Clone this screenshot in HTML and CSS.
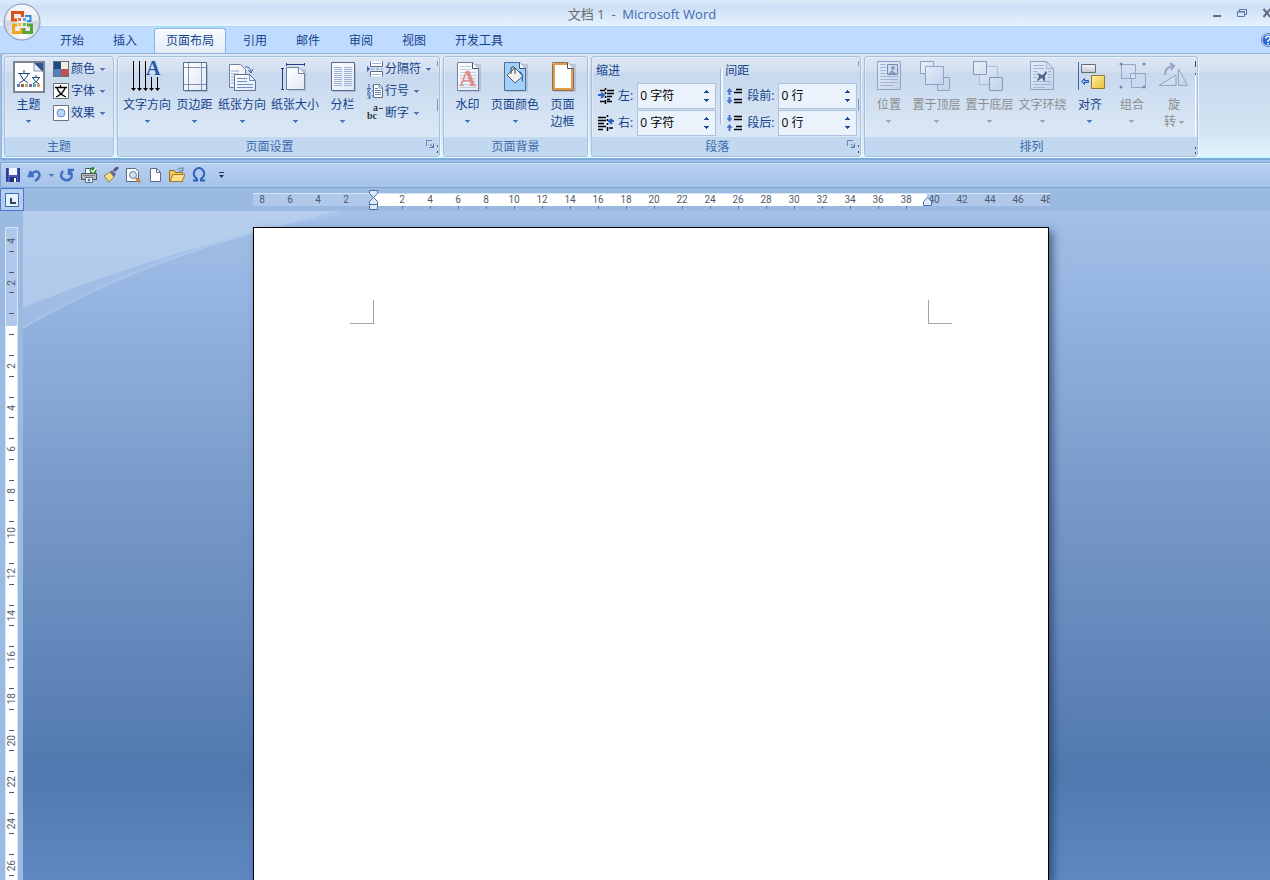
FILE: index.html
```html
<!DOCTYPE html>
<html lang="zh-CN">
<head>
<meta charset="utf-8">
<title>文档 1 - Microsoft Word</title>
<link rel="stylesheet" href="styles.css">
</head>
<body>
<svg class="defs" aria-hidden="true">
  <defs>
    <linearGradient id="paper" x1="0" y1="0" x2="1" y2="1"><stop offset="0" stop-color="#fff"/><stop offset="1" stop-color="#dfe8f5"/></linearGradient>
    <linearGradient id="faded" x1="0" y1="0" x2="1" y2="1"><stop offset="0" stop-color="#e6edf8"/><stop offset="1" stop-color="#c3d2ea"/></linearGradient>
    <linearGradient id="gold" x1="0" y1="0" x2="1" y2="1"><stop offset="0" stop-color="#fff0a0"/><stop offset="1" stop-color="#e9bf35"/></linearGradient>
    <linearGradient id="silver" x1="0" y1="0" x2="0" y2="1"><stop offset="0" stop-color="#f6f7f8"/><stop offset="1" stop-color="#c3c7ce"/></linearGradient>
    <radialGradient id="orb" cx=".5" cy=".85" r=".9"><stop offset="0" stop-color="#fff"/><stop offset=".55" stop-color="#cdd5e3"/><stop offset="1" stop-color="#f2f5fa"/></radialGradient>
    <symbol id="down" viewBox="0 0 5 3"><path d="M0 0h5v1H4v1H3v1H2V2H1V1H0z"/></symbol>
    <symbol id="up" viewBox="0 0 5 3"><path d="M2 0h1v1h1v1h1v1H0V2h1V1h1z"/></symbol>
    <symbol id="launch" viewBox="0 0 9 9"><path d="M.5 6V.5H6" fill="none" stroke="#6485b5"/><path d="M3.500 7.500h4v-4M4 4l3 3" fill="none" stroke="#5578ae"/></symbol>
  </defs>
</svg>

<header class="titlebar">
  <h1 class="title"><span>文档 1</span> &nbsp;-&nbsp; Microsoft Word</h1>
  <div class="window-buttons">
    <button aria-label="最小化"><svg width="10" height="10"><path d="M1 7h8v2H1z" fill="#606b80"/></svg></button>
    <button aria-label="还原"><svg width="10" height="10"><path d="M2.500 3V1.500h7v5H8M2 1.500h8M.5 3.500h7v5h-7zM0 4h8" fill="none" stroke="#5c78a4"/></svg></button>
    <button aria-label="关闭"><svg width="10" height="10"><path d="M1.500 1l7 8M8.500 1l-7 8" stroke="#606b80" stroke-width="2"/></svg></button>
  </div>
</header>

<button class="office" aria-label="Office 按钮">
  <svg width="38" height="38" viewBox="0 0 38 38">
    <circle cx="19" cy="19" r="18" fill="url(#orb)" stroke="#8391ab"/>
    <path d="M3 17a16 15 0 0 1 32 0q-16 5-32 0z" fill="#fff" opacity=".55"/>
    <g fill="none" stroke-width="3">
      <path d="M14 17H9.500V9.500h10V14" stroke="#dc5016"/>
      <path d="M22 13h5.500v5H24" stroke="#3489d4" stroke-width="2"/>
      <path d="M14 22h-3.500v7.500h8V25" stroke="#f4a51b"/>
      <path d="M24 22h4.500v7.500H21V25" stroke="#54a531"/>
    </g>
    <path d="M15 15h3v3h-3z" fill="#ef6a26"/><path d="M20 15h3v3h-3z" fill="#54a5e8"/><path d="M15 20h3v3h-3z" fill="#f9c239"/><path d="M20 20h3v3h-3z" fill="#78bd45"/>
  </svg>
</button>

<nav class="tabs">
  <button class="tab">开始</button>
  <button class="tab">插入</button>
  <button class="tab active" aria-current="page">页面布局</button>
  <button class="tab">引用</button>
  <button class="tab">邮件</button>
  <button class="tab">审阅</button>
  <button class="tab">视图</button>
  <button class="tab">开发工具</button>
  <button class="help" aria-label="帮助"><svg width="14" height="14"><circle cx="7" cy="7" r="6" fill="#2768d8" stroke="#fff"/><circle cx="7" cy="7" r="6.500" fill="none" stroke="#5679b8"/><path d="M4.500 5.500Q5 3 7.200 3.200T9 6L7 8v1M7 10v1.500" fill="none" stroke="#fff" stroke-width="1.500"/></svg></button>
</nav>

<main class="ribbon">
  <section class="group">
    <div class="tools">
      <button class="big">
        <svg width="32" height="32"><path d="M1 1h30v30H1z" fill="#fff" stroke="#7b8490" stroke-width="2"/><path d="M21 2h9v9z" fill="#31508f"/><path d="M21 2v8h8z" fill="#e6edf7" stroke="#8797b0"/><g fill="none" stroke="#1d4379"><path d="M5 12.500h12M11 9v3M7 13q2 6 8 9M15 13q-2 6-9 9"/><path d="M19 16.500h8M23 14v2M20 17q2 4 6 6M26 17q-2 4-6 6"/></g><path d="M4 23h3v3H4z" fill="#4f81bd"/><path d="M8 23h3v3H8z" fill="#c0504d"/><path d="M12 23h3v3h-3z" fill="#9bbb59"/><path d="M16 23h3v3h-3z" fill="#8064a2"/><path d="M20 23h3v3h-3z" fill="#4bacc6"/><path d="M24 23h3v3h-3z" fill="#f79646"/></svg>
        <span>主题</span><svg class="arrow"><use href="#down"/></svg>
      </button>
      <div class="stack">
        <button class="small"><svg width="16" height="16"><path d="M0 0h16v16H0z" fill="#6b717b"/><path d="M1 1h7v7H1z" fill="#1f497d"/><path d="M8 1h7v7H8z" fill="#eeece1"/><path d="M1 8h7v7H1z" fill="#4f81bd"/><path d="M8 8h7v7H8z" fill="#c0504d"/></svg><span>颜色</span><svg class="arrow"><use href="#down"/></svg></button>
        <button class="small"><svg width="16" height="16"><path d="M.5.5h15v15H.5z" fill="#fff" stroke="#6b717b"/><path d="M2 4.500h12M7.500 2v2M4 5q2 6 9 9M12 5q-2 6-9 9" fill="none" stroke="#000" stroke-width="1.300"/></svg><span>字体</span><svg class="arrow"><use href="#down"/></svg></button>
        <button class="small"><svg width="16" height="16"><path d="M.5.5h15v15H.5z" fill="#fff" stroke="#6b717b"/><circle cx="8" cy="8" r="4" fill="#b9d4fa" stroke="#6b8ccc"/></svg><span>效果</span><svg class="arrow"><use href="#down"/></svg></button>
      </div>
    </div>
    <h2 class="caption">主题</h2>
  </section>

  <section class="group seam">
    <div class="tools">
      <button class="big">
        <svg width="32" height="32"><path d="M2.500 0v28M8.500 0v28M14.500 0v28M20.500 16v12M26.500 16v12" stroke="#000"/><path d="M0 27h5l-2.500 3zM6 27h5l-2.500 3zM12 27h5l-2.500 3zM18 27h5l-2.500 3zM24 27h5l-2.500 3z"/><text x="15" y="14" font-family="Liberation Serif" font-size="20" font-weight="700" fill="#2557ad">A</text></svg>
        <span>文字方向</span><svg class="arrow"><use href="#down"/></svg>
      </button>
      <button class="big">
        <svg width="32" height="32"><path d="M6 4h23v27H6z" fill="#8b9cb8" opacity=".5"/><path d="M4.500 1.500h23v28h-23z" fill="url(#paper)" stroke="#566b8c"/><path d="M9.500 2v27M22.500 2v27M5 6.500h22M5 23.500h22" stroke="#8092b4"/></svg>
        <span>页边距</span><svg class="arrow"><use href="#down"/></svg>
      </button>
      <button class="big">
        <svg width="32" height="32"><path d="M3.500 3.500h11l5 5v18h-16z" fill="url(#paper)" stroke="#6e819e"/><path d="M5 10h8M5 13h8M5 16h8M5 19h8M5 22h8" stroke="#8ea4ca"/><path d="M8.500 13.500h15l6 6v10h-21z" fill="url(#paper)" stroke="#5f7493"/><path d="M23.500 13.500v6h6M11 17.500h10M11 20.500h10M11 23.500h16M11 26.500h16" fill="none" stroke="#6f8fc5"/><path d="M19 6q5-1 6 5M22 9l3 3 2-4" fill="none" stroke="#41659e"/></svg>
        <span>纸张方向</span><svg class="arrow"><use href="#down"/></svg>
      </button>
      <button class="big">
        <svg width="32" height="32"><path d="M7 3.500h19M7.500 2v3M25.500 2v3M3.500 7v22M2 7.500h3M2 28.500h3" stroke="#273d8c"/><path d="M9 8h18v22H9z" fill="#8b9cb8" opacity=".4"/><path d="M7.500 6.500h12l6 6v16h-18z" fill="url(#paper)" stroke="#6e819e"/><path d="M19.500 6.500v6h6" fill="#fff" stroke="#6e819e"/></svg>
        <span>纸张大小</span><svg class="arrow"><use href="#down"/></svg>
      </button>
      <button class="big">
        <svg width="32" height="32"><path d="M6 4h23v27H6z" fill="#8b9cb8" opacity=".5"/><path d="M4.500 1.500h23v28h-23z" fill="url(#paper)" stroke="#566b8c"/><path d="M7 6.500h8M7 8.500h8M7 10.500h8M7 12.500h8M7 14.500h8M7 16.500h8M7 18.500h8M7 20.500h8M7 22.500h8M7 24.500h8M17 6.500h8M17 8.500h8M17 10.500h8M17 12.500h8M17 14.500h8M17 16.500h8M17 18.500h8M17 20.500h8M17 22.500h8M17 24.500h8" stroke="#9db1d6"/></svg>
        <span>分栏</span><svg class="arrow"><use href="#down"/></svg>
      </button>
      <div class="stack">
        <button class="small"><svg width="16" height="16"><path d="M0 5l3 3-3 3z" fill="#2f61b8"/><path d="M3.500.5V5.500h12V.5M3.500 15.500v-5h12v5" fill="#fff" stroke="#5b6e8c"/><path d="M5 2.500h9M5 13.500h9" stroke="#9db1d6"/><path d="M4 8h3M9 8h3M14 8h2" stroke="#7d96be"/></svg><span>分隔符</span><svg class="arrow"><use href="#down"/></svg></button>
        <button class="small"><svg width="16" height="16"><path d="M1 1.500h1V5M0 5.500h4M0 7h3l-3 3h4M0 12h3v4H0M1 14h2M5 3h1M5 8h1M5 13h1" fill="none" stroke="#3c6cae"/><path d="M6.500 1.500h6l3 3v10h-9z" fill="#fff" stroke="#5b6e8c"/><path d="M12 1v4h4M8 5.500h3M8 7.500h6M8 9.500h6M8 11.500h6" fill="none" stroke="#6881aa"/></svg><span>行号</span><svg class="arrow"><use href="#down"/></svg></button>
        <button class="small"><svg width="16" height="16" font-family="Liberation Serif" font-weight="700" font-size="10" fill="#333d3b"><text x="0" y="14">bc</text><text x="6" y="6">a</text><path d="M12 3h4v1h-4z"/></svg><span>断字</span><svg class="arrow"><use href="#down"/></svg></button>
      </div>
    </div>
    <h2 class="caption">页面设置</h2>
    <button class="launcher" aria-label="页面设置对话框"><svg width="9" height="9"><use href="#launch"/></svg></button>
  </section>

  <section class="group background">
    <div class="tools">
      <button class="big">
        <svg width="32" height="32"><path d="M7 3h22v28H7z" fill="#8b9cb8" opacity=".4"/><path d="M5.500 1.500h15l6 6v22h-21z" fill="url(#paper)" stroke="#6e819e"/><path d="M8 5.500h11M8 8.500h11M8 11.500h16M8 14.500h16M8 17.500h16M8 20.500h16M8 23.500h16M8 26.500h16" stroke="#c3cddc"/><path d="M20.500 1.500v6h6" fill="#fff" stroke="#41526c"/><text x="7" y="25" font-family="Liberation Serif" font-size="24" font-weight="700" fill="#e08e87">A</text></svg>
        <span>水印</span><svg class="arrow"><use href="#down"/></svg>
      </button>
      <button class="big">
        <svg width="32" height="32"><path d="M7 3h22v28H7z" fill="#8b9cb8" opacity=".4"/><path d="M5.500 1.500h15l6 6v22h-21z" fill="#a3d0fa" stroke="#4c7098"/><path d="M20.500 1.500v6h6" fill="#fff" stroke="#41526c"/><path d="M8 14l8-7 8 8-8 7z" fill="#f0f2f2" stroke="#50565c"/><path d="M12 13V7q2-3 4 0v6" fill="none" stroke="#3c4249"/><path d="M19 10q6 0 5 11-2-1-1-6z" fill="#2b5eaf"/></svg>
        <span>页面颜色</span><svg class="arrow"><use href="#down"/></svg>
      </button>
      <button class="big">
        <svg width="32" height="32"><path d="M7 3h22v28H7z" fill="#8b9cb8" opacity=".4"/><path d="M5.500 1.500h15l6 6v22h-21z" fill="#fff" stroke="#877254"/><path d="M7 3h13M7 3v25h18V8" fill="none" stroke="#e29b4b" stroke-width="2"/><path d="M20.500 1.500v6h6" fill="#fff" stroke="#41526c"/></svg>
        <span>页面<br>边框</span>
      </button>
    </div>
    <h2 class="caption">页面背景</h2>
  </section>

  <section class="group seam">
    <div class="tools paragraph">
      <fieldset class="fields">
        <legend>缩进</legend>
        <div class="field">
          <svg width="16" height="16"><path d="M0 7h5M3 5l3 2-3 3" fill="none" stroke="#2e62bd" stroke-width="2"/><path d="M2 2.500h5M9 2.500h7M9 5.500h7M9 8.500h5M9 11.500h3M2 13.500h5M9 13.500h5M7.500 0v2M7.500 4v2M7.500 8v2M7.500 12v4" stroke="#000" stroke-width="1.500"/></svg>
          <label for="left">左:</label>
          <span class="spin"><input id="left" value="0 字符"><span><button aria-label="增加"><svg class="arrow"><use href="#up"/></svg></button><button aria-label="减少"><svg class="arrow"><use href="#down"/></svg></button></span></span>
        </div>
        <div class="field">
          <svg width="16" height="16"><path d="M16 6h-4M14 4l-3 2 3 3" fill="none" stroke="#2e62bd" stroke-width="2"/><path d="M0 2.500h8M0 5.500h8M0 8.500h6M0 11.500h8M0 14.500h5M9.500 0v2M9.500 4v2M9.500 8v2M9.500 12v4M11 13h4" stroke="#000" stroke-width="1.500"/></svg>
          <label for="right">右:</label>
          <span class="spin"><input id="right" value="0 字符"><span><button aria-label="增加"><svg class="arrow"><use href="#up"/></svg></button><button aria-label="减少"><svg class="arrow"><use href="#down"/></svg></button></span></span>
        </div>
      </fieldset>
      <fieldset class="fields split">
        <legend>间距</legend>
        <div class="field">
          <svg width="16" height="16"><path d="M2.500 0L5.500 4h-6zM2.500 16l3-4h-6zM1.500 4h2v3h-2zM1.500 9h2v3h-2z" fill="#4674cc"/><path d="M9 1.500h6M7 4.500h8M7 11.500h8M7 14.500h8" stroke="#000" stroke-width="1.300"/></svg>
          <label for="before">段前:</label>
          <span class="spin"><input id="before" value="0 行"><span><button aria-label="增加"><svg class="arrow"><use href="#up"/></svg></button><button aria-label="减少"><svg class="arrow"><use href="#down"/></svg></button></span></span>
        </div>
        <div class="field">
          <svg width="16" height="16"><path d="M2.500 7l3-4h-6zM2.500 9l3 4h-6zM1.500 0h2v3h-2zM1.500 13h2v3h-2z" fill="#4674cc"/><path d="M7 1.500h8M7 4.500h8M9 11.500h6M7 14.500h8" stroke="#000" stroke-width="1.300"/></svg>
          <label for="after">段后:</label>
          <span class="spin"><input id="after" value="0 行"><span><button aria-label="增加"><svg class="arrow"><use href="#up"/></svg></button><button aria-label="减少"><svg class="arrow"><use href="#down"/></svg></button></span></span>
        </div>
      </fieldset>
    </div>
    <h2 class="caption">段落</h2>
    <button class="launcher" aria-label="段落对话框"><svg width="9" height="9"><use href="#launch"/></svg></button>
  </section>

  <section class="group seam bright">
    <div class="tools">
      <button class="big" disabled>
        <svg width="32" height="32"><path d="M4.500.5h23v28h-23z" fill="url(#faded)" stroke="#8fa3c5"/><path d="M7 3.500h6M7 6.500h6M7 9.500h6M7 12.500h6M7 15.500h18M7 18.500h18M7 21.500h18M7 24.500h14" stroke="#a3b5d4"/><path d="M14.500 3.500h10v10h-10z" fill="#d3def0" stroke="#7489ae"/><circle cx="20" cy="7" r="2" fill="#8b9dbc"/><path d="M15 13l4-4 5 4z" fill="#8b9dbc"/></svg>
        <span>位置</span><svg class="arrow"><use href="#down"/></svg>
      </button>
      <button class="big" disabled>
        <svg width="32" height="32" fill="url(#faded)" stroke="#8fa3c8"><path d="M.5.5h13v12H.5zM17.500 16.500h12v13h-12z"/><path d="M5.500 5.500h18v18h-18z"/></svg>
        <span>置于顶层</span><svg class="arrow"><use href="#down"/></svg>
      </button>
      <button class="big" disabled>
        <svg width="32" height="32" fill="url(#faded)" stroke="#8598bb"><path d="M6.500 5.500h18v18h-18z" stroke="#adbfda"/><path d="M.5.500h13v13H.5zM16.500 16.500h13v13h-13z"/></svg>
        <span>置于底层</span><svg class="arrow"><use href="#down"/></svg>
      </button>
      <button class="big" disabled>
        <svg width="32" height="32"><path d="M4.500.5h16l7 7v21h-23z" fill="url(#faded)" stroke="#8fa3c5"/><path d="M20.500.5v7h7M7 4.500h11M7 7.500h11M7 10.500h4M7 13.500h4M7 16.500h4M22 10.500h3M22 13.500h3M22 16.500h3M7 20.500h18M7 23.500h18M7 26.500h12" fill="none" stroke="#a3b5d4"/><path d="M11 11l2 2 4 1 3-4 1 2-2 3v5h-1l-2-3-2 1-2 2-1-1 2-3z" fill="#4f6690"/></svg>
        <span>文字环绕</span><svg class="arrow"><use href="#down"/></svg>
      </button>
      <button class="big">
        <svg width="32" height="32"><path d="M4.500 1v28" stroke="#3a65b9"/><path d="M7.500 3.500h14v8h-14z" fill="url(#silver)" stroke="#666b73"/><path d="M17.500 14.500h13v13h-13z" fill="url(#gold)" stroke="#937638"/><path d="M7.500 20.500l3-3v2h4v2h-4v2z" fill="#88b4f3" stroke="#2456ac"/></svg>
        <span>对齐</span><svg class="arrow"><use href="#down"/></svg>
      </button>
      <button class="big" disabled>
        <svg width="32" height="32" fill="none" stroke="#95a6c5"><path d="M5.500 3.500h14v14h-14zM15.500 12.500h14v14h-14z"/><path d="M14.500 12.500h5v5h-5z" fill="#d4dff0"/><g fill="#7489ad" stroke="none"><circle cx="5" cy="3" r="1.500"/><circle cx="28" cy="3" r="1.500"/><circle cx="5" cy="26" r="1.500"/><circle cx="28" cy="26" r="1.500"/></g></svg>
        <span>组合</span><svg class="arrow"><use href="#down"/></svg>
      </button>
      <button class="big" disabled>
        <svg width="32" height="32" fill="url(#faded)" stroke="#93a5c3"><path d="M1 24.500h17V14zM20.500 8l9 16.500h-9z"/><path d="M7 14q0-8 8-9M12 2l4 3-3 4" fill="none" stroke-width="2"/></svg>
        <span>旋<br>转 <svg class="arrow inline"><use href="#down"/></svg></span>
      </button>
    </div>
    <h2 class="caption">排列</h2>
  </section>
</main>

<div class="quick" role="toolbar" aria-label="快速访问工具栏">
  <button aria-label="保存"><svg width="16" height="16"><path d="M1 1h14v14H1z" fill="#4f59bd"/><path d="M1 1h2v13H1zM13 1h2v14h-2z" fill="#303c97"/><path d="M4 1h8v7H4z" fill="#f4f6ff"/><path d="M5 10h7v5H5z" fill="#282f72"/><path d="M9 11h2v4H9z" fill="#fff"/></svg></button>
  <button aria-label="撤消"><svg width="16" height="16"><path d="M4 4l-2 5h5M3 8q7-6 9-2t-4 8" fill="none" stroke="#426fc5" stroke-width="2.500"/></svg></button>
  <button class="narrow" aria-label="撤消列表"><svg class="arrow"><use href="#down"/></svg></button>
  <button aria-label="恢复"><svg width="16" height="16"><path d="M4 4q-4 5 0 8 5 3 8-1 2-4-2-7M10 8V3h5" fill="none" stroke="#426fc5" stroke-width="2.500"/></svg></button>
  <button aria-label="快速打印"><svg width="16" height="16"><path d="M4.500 1.500h7v5h-7z" fill="#fff" stroke="#525963"/><path d="M.5 6.500h15v6H.5z" fill="#b8babf" stroke="#50555e"/><path d="M2 8.500h12" stroke="#7c8088"/><path d="M4.500 10.500h7v5h-7z" fill="#fff" stroke="#626a77"/><circle cx="8" cy="13" r="1.500" fill="#3f81cf"/><circle cx="12" cy="3.500" r="3.300" fill="#288b39"/><path d="M10 3l2 2 3-4" fill="none" stroke="#fff" stroke-width="1.300"/></svg></button>
  <button aria-label="格式刷"><svg width="16" height="16"><path d="M1 9l6-4 4 5-5 5q-2-3-5-6z" fill="#f3df7d" stroke="#8b8244"/><path d="M7 5l2-2 4 4-2 3z" fill="#656b93"/><path d="M11 4l4-4" stroke="#565386" stroke-width="3"/></svg></button>
  <button aria-label="打印预览"><svg width="16" height="16"><path d="M1.500 1.500h9l3 3v10h-12z" fill="#fff" stroke="#566983"/><circle cx="8" cy="8" r="3.500" fill="#cfe2f8" stroke="#647c9f"/><path d="M11 11l4 4" stroke="#d27c26" stroke-width="2.500"/></svg></button>
  <button aria-label="新建"><svg width="16" height="16"><path d="M3.500 1.500h6l4 4v9h-10z" fill="#fff" stroke="#5a6c88"/><path d="M9.500 1.500v4h4" fill="none" stroke="#5a6c88"/></svg></button>
  <button aria-label="打开"><svg width="16" height="16"><path d="M.5 14.500v-11h5l1 2h7v9z" fill="#f6c751" stroke="#927031"/><path d="M1 14.500l3-7h12l-3 7z" fill="#ffe08a" stroke="#a27b2c"/><path d="M8 3q3-4 6 0M14 0v4h-4" fill="none" stroke="#617ba4"/></svg></button>
  <button aria-label="符号"><svg width="16" height="16"><path d="M2 13.500h4V12Q2 9 3 5q2-4 5-4t5 4q1 4-3 7v1.500h4" fill="none" stroke="#2d5fc0" stroke-width="2"/></svg></button>
  <button aria-label="自定义快速访问工具栏"><svg width="5" height="7" fill="#1d335b"><path d="M0 0h5v1H0zM0 3h5L2.500 6z"/></svg></button>
</div>

<div class="ruler">
  <button class="tabstop" aria-label="左对齐制表符"><svg width="14" height="14"><path d="M.5.5h13v13H.5z" fill="#e6effc" stroke="#3969b4"/><path d="M5 5h2v4h4v2H5z" fill="#33435e"/></svg></button>
  <div class="scale">
    <ol class="marks">
      <li>8<li>6<li>4<li>2<li><li class="in">2<li class="in">4<li class="in">6<li class="in">8<li class="in">10<li class="in">12<li class="in">14<li class="in">16<li class="in">18<li class="in">20<li class="in">22<li class="in">24<li class="in">26<li class="in">28<li class="in">30<li class="in">32<li class="in">34<li class="in">36<li class="in">38<li>40<li>42<li>44<li>46<li>48
    </ol>
    <svg class="indent first" width="9" height="21" fill="#dfe9f8" stroke="#4a72ae"><path d="M.5.5h8v3l-4 4-4-4zM.5 14.500v-3l4-4 4 4v3zM.5 14.500h8v5h-8z"/></svg>
    <svg class="indent last" width="9" height="9" fill="#dfe9f8" stroke="#4a72ae"><path d="M.5 8.500v-4l4-4 4 4v4z"/></svg>
  </div>
</div>

<div class="workspace">
  <svg class="swoosh" width="320" height="120"><path d="M0 0h317Q130 43 0 97z" fill="#c4d9f0" opacity=".6"/><path d="M0 97Q130 43 317 0h20Q130 37 0 117z" fill="#b3cdee" opacity=".35"/><path d="M0 117Q100 57 255 14" fill="none" stroke="#b3cdee" stroke-width="2" opacity=".6"/></svg>
  <div class="side">
    <div class="vscale">
      <ol class="vmarks">
        <li><span>4</span><li><span>2</span><li><span></span><li><span>2</span><li><span>4</span><li><span>6</span><li><span>8</span><li><span>10</span><li><span>12</span><li><span>14</span><li><span>16</span><li><span>18</span><li><span>20</span><li><span>22</span><li><span>24</span><li><span>26</span>
      </ol>
    </div>
  </div>
  <article class="page" aria-label="文档">
    <i class="corner left"></i><i class="corner right"></i>
  </article>
</div>
</body>
</html>
```
FILE: styles.css
```css
* { box-sizing: border-box; }
body {
  margin: 0;
  height: 100vh;
  overflow: hidden;
  display: flex;
  flex-direction: column;
  background: #a0bfe8;
  font: 12px/16px "Open Sans", "Noto Sans CJK SC", sans-serif;
  color: #15428b;
}
button {
  margin: 0;
  padding: 0;
  border: 0;
  background: none;
  color: inherit;
  font: inherit;
}
svg { display: block; flex: none; }
ol { margin: 0; padding: 0; list-style: none; }
.defs { position: absolute; width: 0; height: 0; }
.arrow { width: 5px; height: 3px; fill: #4e78b8; }

.titlebar {
  display: flex;
  flex: none;
  height: 27px;
  padding-left: 14px;
  position: relative;
  overflow: hidden;
  justify-content: center;
  background: linear-gradient(#dbe9fb 0, #d6e5fa 5px, #cbdef6 6px, #e4f1fe 25px);
  border-bottom: 1px solid #b2d5f2;
}
.title {
  margin: 0;
  font-size: 13px;
  line-height: 28px;
  font-weight: 400;
  color: #3e6aaa;
}
.title span { color: #696969; }
.window-buttons {
  position: absolute;
  top: 8px;
  right: -2px;
  display: flex;
  gap: 15px;
}
.office { position: absolute; left: 3px; top: 3px; z-index: 2; }

.tabs {
  display: flex;
  flex: none;
  gap: 5px;
  height: 26px;
  padding: 1px 0 0 48px;
  background: #bfdbff;
  overflow: hidden;
}
.tab { padding: 0 12px; line-height: 24px; }
.tab.active {
  position: relative;
  z-index: 1;
  border: 1px solid #8db2e3;
  border-bottom: 0;
  border-radius: 3px 3px 0 0;
  padding: 0 11px;
  line-height: 22px;
  background: linear-gradient(#f6faff, #e3edfa);
  box-shadow: inset 0 1px #fff, 0 0 3px #8ff3ff;
}
.help { margin: 5px -5px 0 auto; align-self: flex-start; }

.ribbon {
  display: flex;
  flex: none;
  gap: 3px;
  padding: 2px 3px 1px 2px;
  margin: 0 0 2px 1px;
  border: 1px solid #8db2e3;
  border-right: 0;
  border-top-left-radius: 3px;
  border-bottom: 2px solid #7fa8dc;
  background: linear-gradient(#dde7f3 0, #d5e1f1 17px, #c8d8ed 18px, #d5e4f3 80px, #e2f4fd 102px);
  box-shadow: inset 0 -2px #c9f8ff;
}
.group {
  position: relative;
  display: flex;
  flex-direction: column;
  border: 1px solid #a3c0de;
  border-radius: 3px;
  background: linear-gradient(#dce6f4 0, #d3dff0 15px, #c8d8ed 16px, #dae8f6 79px);
  box-shadow: inset 1px 1px rgba(255, 255, 255, .35), 1px 1px rgba(255, 255, 255, .6);
}
.tools {
  display: flex;
  gap: 5px;
  min-height: 80px;
  padding: 0 5px;
}
.background .tools { padding-right: 6px; }
.caption {
  margin: 0;
  font-size: 12px;
  font-weight: 400;
  line-height: 19px;
  text-align: center;
  background: #c1d8f0;
  color: #3e6aaa;
  border-radius: 0 0 2px 2px;
}
.seam .caption { padding-right: 18px; }
.bright .caption { padding-right: 0; }
.seam::after {
  content: "";
  position: absolute;
  right: 1px;
  top: 4px;
  bottom: 2px;
  width: 1px;
  background: linear-gradient(#8195b4 0 5px, transparent 5px 38px, #8195b4 38px 50px, transparent 50px 84px, #456392 84px 86px, transparent 86px 90px, #2e4a78 90px 92px, transparent 92px);
}
.seam.bright::after {
  background: linear-gradient(#2450a0 0 6px, transparent 6px 12px, #456392 12px 14px, #fff 14px 76px, transparent 76px 86px, #2e4a78 86px 88px, transparent 88px 91px, #2e4a78 91px);
}
.launcher { position: absolute; right: 4px; bottom: 7px; }

.big {
  display: flex;
  flex-direction: column;
  align-items: center;
  min-width: 37px;
  padding-top: 4px;
  line-height: 17px;
}
.big > span { margin-top: 3px; text-align: center; }
.big > .arrow { margin-top: 7px; }
.inline { display: inline-block; vertical-align: middle; }
.big:disabled { color: #8d8d8d; }
.big:disabled .arrow { fill: #a6a6a6; }
.stack { display: flex; flex-direction: column; padding: 1px 0 0 1px; }
.small { display: flex; align-items: center; gap: 2px; height: 22px; }
.small .arrow { margin: 0 3px; }

.paragraph { padding: 5px 3px 0 4px; gap: 4px; }
.fields {
  display: flex;
  flex-direction: column;
  gap: 1px;
  margin: 0;
  padding: 0;
  border: 0;
  min-width: 0;
}
.fields legend { padding: 0; height: 21px; line-height: 18px; }
.split { padding-left: 5px; position: relative; }
.split::before {
  content: "";
  position: absolute;
  left: 0;
  top: 6px;
  width: 2px;
  height: 56px;
  margin-top: -21px;
  border-left: 1px solid #9db7d8;
  background: #f0f6fd;
}
.field { display: flex; align-items: center; gap: 4px; padding-left: 2px; }
.spin {
  display: flex;
  width: 79px;
  height: 26px;
  border: 1px solid #abc1de;
  background: #eaf2fb;
}
.spin input {
  flex: 1;
  min-width: 0;
  padding: 0 2px;
  border: 0;
  background: none;
  font: inherit;
  color: #000;
}
.spin > span { display: flex; flex-direction: column; justify-content: space-evenly; padding-right: 6px; }
.spin .arrow { fill: #1d4b94; }

.quick {
  display: flex;
  flex: none;
  align-items: center;
  height: 26px;
  padding-left: 1px;
  border: 1px solid #7fa3d3;
  border-right: 0;
  border-radius: 3px 0 0 3px;
  background: linear-gradient(#b9d1f0, #a5c2e9);
  box-shadow: inset 0 1px #d3e4f9, 0 1px #dae9fb;
}
.quick button { display: grid; place-items: center; width: 22px; height: 22px; }
.quick .narrow { width: 10px; }

.ruler { display: flex; flex: none; height: 23px; background: #9bbae1; }
.tabstop {
  display: grid;
  place-items: center;
  width: 24px;
  height: 23px;
  border: 1px solid #4a76cc;
  background: #b5cdef;
}
.scale { position: relative; width: 797px; margin: 5px 0 0 229px; }
.marks {
  display: flex;
  height: 18px;
  overflow: hidden;
  font: 10px/11px "Liberation Sans Narrow", Roboto, sans-serif;
  color: #4f5a6c;
  background: linear-gradient(90deg, #b0c9eb 121px, #fff 121px 674px, #b0c9eb 674px) 0 0 / 100% 13px no-repeat;
  box-shadow: inset 0 1px #d5e4f8;
}
.marks li { flex: 0 0 28px; text-align: center; padding-top: 1px; }
.marks li:first-child { margin-left: -5px; }
.in::after {
  content: "";
  display: block;
  width: 1px;
  height: 3px;
  margin: 1px auto 0;
  background: #6b7483;
}
.indent { position: absolute; }
.first { left: 116px; top: -3px; }
.last { left: 670px; top: 4px; }

.workspace {
  position: relative;
  display: flex;
  flex: 1;
  min-height: 0;
  overflow: hidden;
  background: linear-gradient(#a2c0e9 0, #7b9ccb 40%, #5179af 84%, #5d88c2 100%);
}
.swoosh { position: absolute; left: 23px; top: 0; }
.side { display: flex; width: 23px; padding: 16px 5px 0; background: #9bbae1; }
.vscale {
  flex: 1;
  overflow: hidden;
  border: 1px solid #d5e4f8;
  border-bottom: 0;
  background: linear-gradient(#b0c9eb 98px, #fff 98px);
}
.vmarks {
  display: grid;
  grid-auto-rows: 1fr;
  height: 666px;
  margin-top: -8px;
  font: 10px/11px "Liberation Sans Narrow", Roboto, sans-serif;
  color: #4f5a6c;
}
.vmarks li {
  display: flex;
  flex-direction: column;
  justify-content: space-between;
  align-items: center;
  padding: 10px 0;
}
.vmarks li::before, .vmarks li::after { content: ""; width: 5px; height: 1px; background: #4f5a6c; }
.vmarks li:first-child::before { background: none; }
.vmarks span { writing-mode: vertical-rl; transform: rotate(180deg); }
.page {
  position: relative;
  display: flex;
  justify-content: space-between;
  width: 796px;
  margin: 16px 0 0 230px;
  padding: 72px 96px;
  border: 1px solid #000;
  border-bottom: 0;
  background: #fff;
  box-shadow: 4px 4px 8px rgba(20, 40, 80, .6);
}
.corner { width: 24px; height: 24px; border-bottom: 1px solid #a5a5a5; }
.corner.left { border-right: 1px solid #a5a5a5; }
.corner.right { border-left: 1px solid #a5a5a5; }
```
